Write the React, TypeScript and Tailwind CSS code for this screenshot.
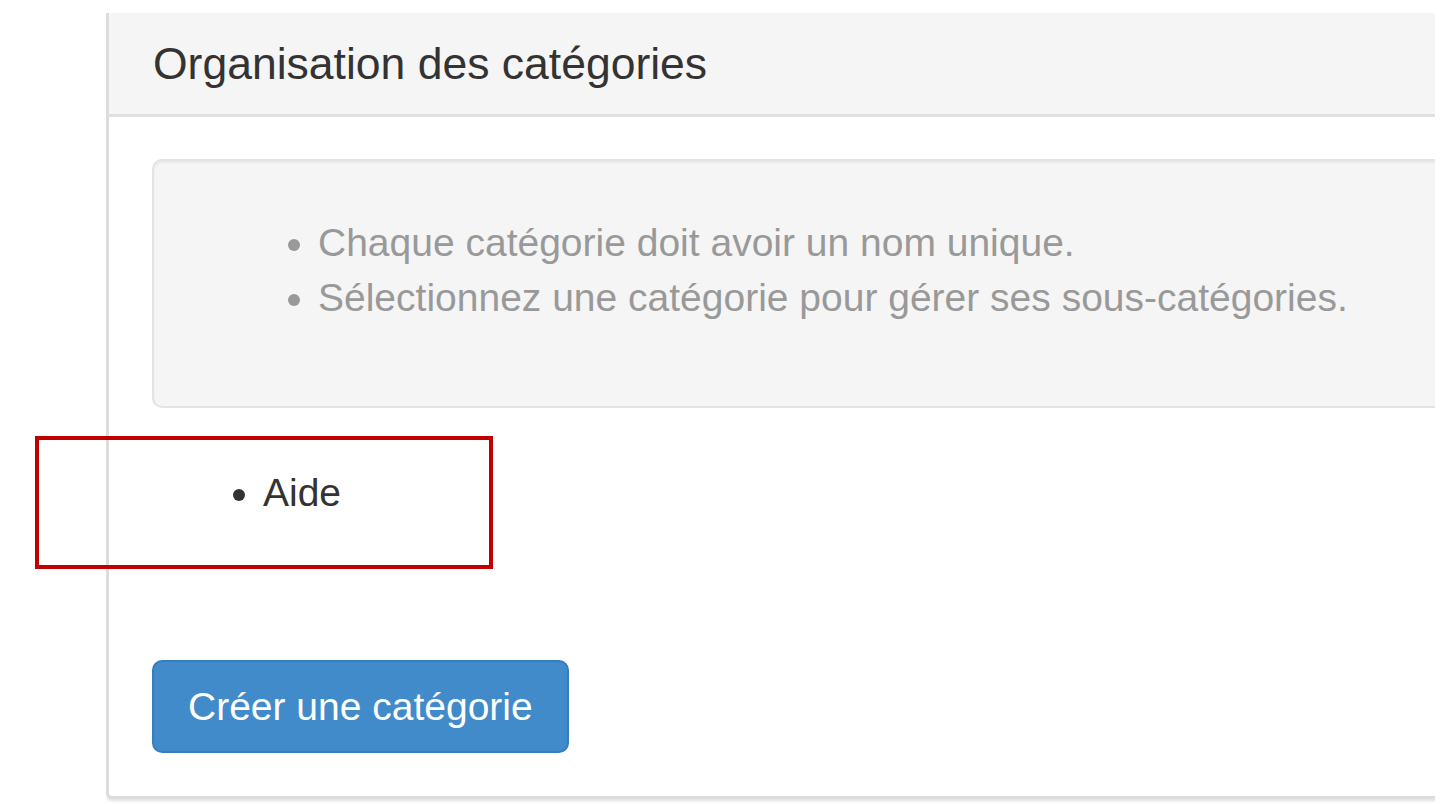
export default function App() {
  return (
    <div className="relative w-[1441px] h-[804px] bg-white overflow-hidden font-['Liberation_Sans',Arial,sans-serif]">
      {/* Panel, clipped on the right like the screenshot */}
      <div className="ml-[106px] mt-[13px] w-[1329px] overflow-hidden pb-[5px]">
        <div className="w-[1400px] bg-white border-l-[3px] border-b-[3px] border-[#dcdcdc] rounded-bl-[6px] shadow-[0_2px_3px_rgba(0,0,0,0.12)]">
          {/* Heading */}
          <div className="bg-[#f5f5f5] border-b-[3px] border-[#e0e0e0] px-[44px] pt-[27px] pb-[26px]">
            <h3 className="text-[44.5px] leading-[48px] text-[#333]">Organisation des catégories</h3>
          </div>

          {/* Body */}
          <div className="pl-[43px] pt-[42px] pb-[43px]">
            <div className="w-[1400px] bg-[#f5f5f5] border-[2px] border-[#e3e3e3] rounded-[10px] shadow-[inset_0_2px_2px_rgba(0,0,0,0.05)] pl-[54px] pt-[54px] pb-[53px]">
              <ul className="list-disc pl-[110px] mb-[28px] text-[39px] leading-[55px] text-[#999] marker:text-[#999]">
                <li>Chaque catégorie doit avoir un nom unique.</li>
                <li>Sélectionnez une catégorie pour gérer ses sous-catégories.</li>
              </ul>
            </div>

            <ul className="list-disc pl-[111px] mt-[57px] text-[39px] leading-[55px] text-[#333]">
              <li>Aide</li>
            </ul>

            <button className="mt-[140px] h-[93px] px-[34px] rounded-[10px] bg-[#428bca] border-[2px] border-[#357ebd] text-white text-[39px] leading-[55px]">
              Créer une catégorie
            </button>
          </div>
        </div>
      </div>

      {/* Red annotation frame */}
      <div className="absolute left-[35px] top-[436px] w-[458px] h-[133px] border-[4px] border-[#c00000]" />
    </div>
  );
}
